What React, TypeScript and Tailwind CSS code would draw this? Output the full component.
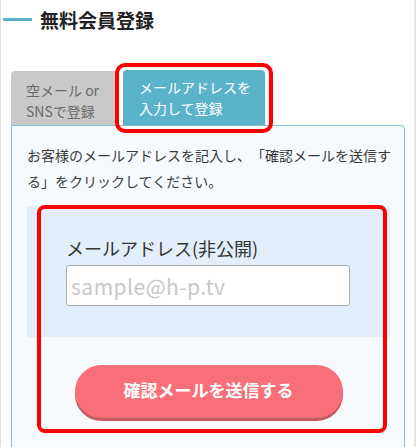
const font = { fontFamily: '"Noto Sans CJK JP", "Noto Sans", sans-serif' };

export default function App() {
  return (
    <div
      className="relative w-[416px] h-[447px] overflow-hidden bg-white border-l border-l-[#dedede] border-r-2 border-r-[#e4e4e4] [text-spacing-trim:space-all]"
      style={font}
    >
      {/* Heading */}
      <div className="flex items-center h-[38px] pl-[2px]">
        <div className="w-[29px] h-[3px] bg-[#5ab3c9]" />
        <h2 className="ml-[8px] text-[19px] leading-none font-bold text-[#222]">
          無料会員登録
        </h2>
      </div>

      {/* Tabs */}
      <div className="flex items-end gap-[5px] pl-[10px] mt-[32px]">
        <div className="w-[107px] h-[54px] rounded-t-[4px] bg-[#c9c9c9] pl-[15px] pt-[9px] text-[14px] leading-[21px] text-[#6a6a6a]">
          空メール or
          <br />
          SNSで登録
        </div>
        <div className="w-[142px] h-[55px] rounded-t-[4px] bg-[#5ab3c9] pl-[16px] pt-[7px] text-[14px] leading-[21px] text-white">
          メールアドレスを
          <br />
          入力して登録
        </div>
      </div>

      {/* Panel */}
      <div className="ml-[10px] w-[394px] h-[330px] border border-[#86bfd2] rounded-tr-[4px] bg-[#f6fafd] pl-[15px] pt-[16px]">
        <p className="w-[366px] text-[14px] leading-[26px] text-[#3a3a3a]">
          お客様のメールアドレスを記入し、「確認メールを送信する」をクリックしてください。
        </p>

        <div className="mt-[12px] w-[363px] h-[131px] bg-[#e2eef9] pl-[39px] pt-[28px]">
          <label className="block text-[18px] leading-[28px] text-[#333]">
            メールアドレス(非公開)
          </label>
          <input
            type="text"
            placeholder="sample@h-p.tv"
            className="mt-[3px] w-[284px] h-[41px] bg-white border border-[#aaa] rounded-[3px] px-[4px] text-[21px] tracking-[0.5px] placeholder:text-[#c8c8c8] outline-none"
            style={font}
          />
        </div>

        <div className="w-[363px] flex justify-center pt-[28px]">
          <button className="w-[268px] h-[53px] rounded-full bg-[#f86f7a] shadow-[0_3px_0_#c65b63] text-white text-[17px] font-bold pb-[3px]">
            確認メールを送信する
          </button>
        </div>
      </div>

      {/* Red annotation frames */}
      <div className="absolute left-[114px] top-[63px] w-[158px] h-[70px] border-4 border-[#ff0000] rounded-[10px] pointer-events-none" />
      <div className="absolute left-[36px] top-[205px] w-[350px] h-[228px] border-4 border-[#ff0000] rounded-[8px] pointer-events-none" />
    </div>
  );
}
